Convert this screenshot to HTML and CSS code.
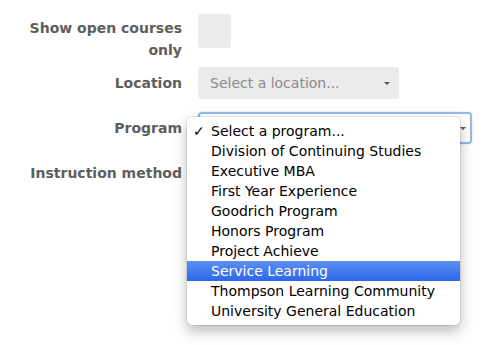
FILE: index.html
```html
<!DOCTYPE html>
<html lang="en">
<head>
    <meta charset="UTF-8">
    <title>Course Search</title>
    <link rel="stylesheet" href="styles.css">
</head>
<body>

<form class="filtros">
    <div class="fila fila-check">
        <label class="etiqueta">Show open courses only</label>
        <span class="casilla"></span>
    </div>

    <div class="fila">
        <label class="etiqueta">Location</label>
        <div class="selector selector-gris">
            <span class="placeholder">Select a location...</span>
            <span class="flecha"></span>
        </div>
    </div>

    <div class="fila">
        <label class="etiqueta">Program</label>
        <div class="selector selector-foco">
            <span class="flecha"></span>
        </div>
    </div>

    <div class="fila">
        <label class="etiqueta">Instruction method</label>
        <div class="selector selector-gris"></div>
    </div>
</form>

<!-- Menu desplegable abierto del programa -->
<ul class="menu">
    <li class="opcion marcada">Select a program...</li>
    <li class="opcion">Division of Continuing Studies</li>
    <li class="opcion">Executive MBA</li>
    <li class="opcion">First Year Experience</li>
    <li class="opcion">Goodrich Program</li>
    <li class="opcion">Honors Program</li>
    <li class="opcion">Project Achieve</li>
    <li class="opcion activa">Service Learning</li>
    <li class="opcion">Thompson Learning Community</li>
    <li class="opcion">University General Education</li>
</ul>

</body>
</html>
```

FILE: styles.css
```css
body {
    margin: 0;
    background-color: #fff;
    font-family: "DejaVu Sans", sans-serif;
}

.filtros {
    padding-top: 14px;
}

.fila {
    display: grid;
    grid-template-columns: 182px 1fr;
    column-gap: 16px;
    align-items: center;
    height: 32px;
    margin-bottom: 13px;
}

.fila-check {
    align-items: start;
    height: 47px;
    margin-bottom: 6px;
}

.etiqueta {
    text-align: right;
    font-weight: bold;
    font-size: 14px;
    line-height: 22px;
    color: #5e5e5e;
}

.fila-check .etiqueta {
    padding-top: 3px;
    padding-left: 20px;
}

.casilla {
    display: block;
    width: 33px;
    height: 34px;
    background-color: #ebebeb;
    border-radius: 3px;
}

.selector {
    position: relative;
    box-sizing: border-box;
    height: 32px;
    border-radius: 4px;
}

.selector-gris {
    width: 201px;
    background-color: #ebebeb;
}

.selector-foco {
    width: 274px;
    background-color: #fff;
    border: 2px solid #97b9e6;
    box-shadow: 0 0 2px rgba(80, 140, 220, 0.4);
}

.placeholder {
    display: block;
    padding-left: 12px;
    line-height: 32px;
    font-size: 14px;
    color: #8a8a8a;
}

.flecha {
    position: absolute;
    right: 9px;
    top: 15px;
    width: 0;
    height: 0;
    border-left: 3px solid transparent;
    border-right: 3px solid transparent;
    border-top: 3px solid #555;
}

.selector-foco .flecha {
    right: 4px;
    top: 13px;
}

/* Menu abierto */
.menu {
    position: absolute;
    left: 187px;
    top: 117px;
    width: 273px;
    margin: 0;
    padding: 4px 0;
    list-style: none;
    background-color: #fff;
    border-radius: 5px;
    box-shadow: 0 0 0 1px rgba(0, 0, 0, 0.08), 0 6px 14px rgba(0, 0, 0, 0.28);
}

.opcion {
    position: relative;
    height: 20px;
    line-height: 20px;
    padding-left: 24px;
    font-size: 14px;
    color: #000;
}

.marcada::before {
    content: "\2713";
    position: absolute;
    left: 6px;
}

.activa {
    background: linear-gradient(#5b8ff2, #2d66ec);
    color: #fff;
}
```
